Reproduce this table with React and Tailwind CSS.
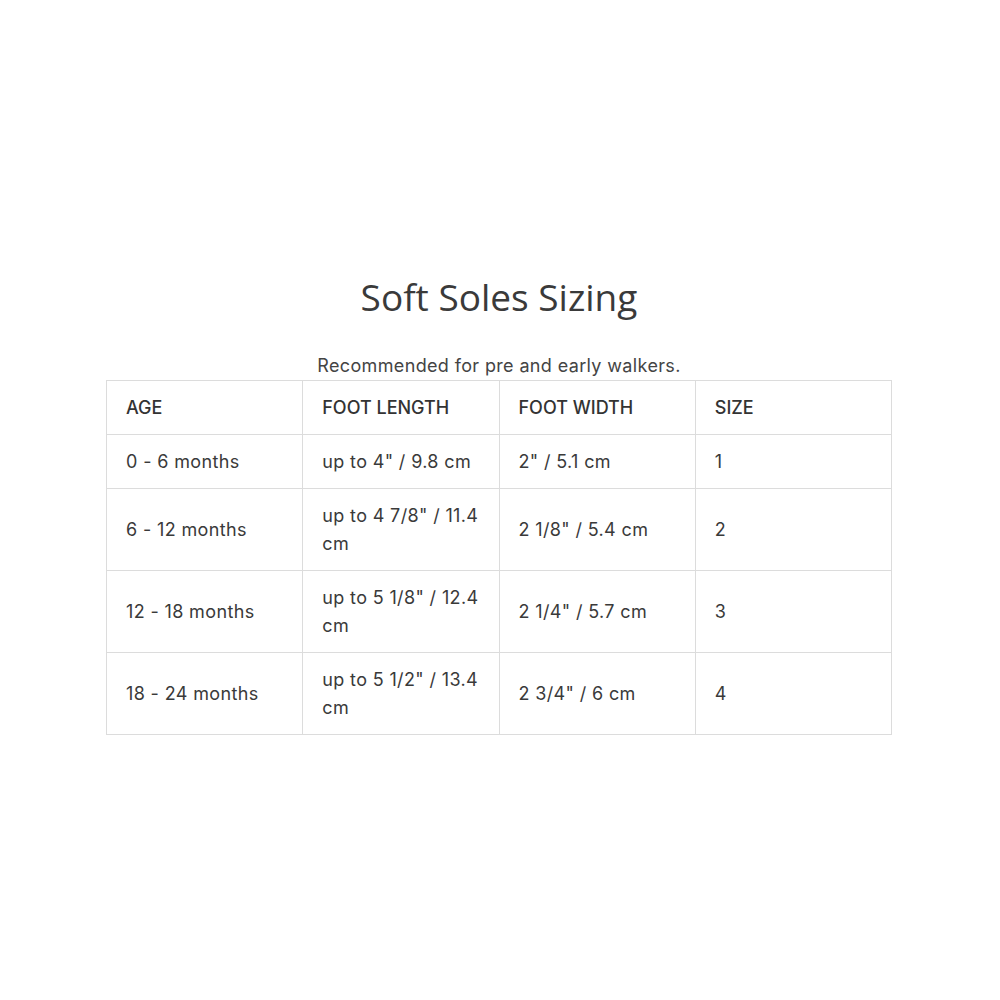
import React from "react";

const rows = [
  ["0 - 6 months", "up to 4\" / 9.8 cm", "2\" / 5.1 cm", "1"],
  ["6 - 12 months", "up to 4 7/8\" / 11.4 cm", "2 1/8\" / 5.4 cm", "2"],
  ["12 - 18 months", "up to 5 1/8\" / 12.4 cm", "2 1/4\" / 5.7 cm", "3"],
  ["18 - 24 months", "up to 5 1/2\" / 13.4 cm", "2 3/4\" / 6 cm", "4"],
];

export default function App() {
  return (
    <div className="min-h-screen bg-white pt-[274px] text-[#333]">
      <div className="ml-[106px] w-[786px]">
        <h1 className="text-center font-['Open_Sans',sans-serif] text-[37px] leading-[46px] text-[#3a3a3a]">
          Soft Soles Sizing
        </h1>
        <p className="mt-[33px] mb-[1px] text-center font-['Inter',sans-serif] text-[18px] leading-[26px] tracking-[0.02em] text-[#444]">
          Recommended for pre and early walkers.
        </p>
        <table className="w-full table-fixed border-collapse font-['Inter',sans-serif] text-[18px] leading-[28px] tracking-[0.02em]">
          <thead>
            <tr>
              {["AGE", "FOOT LENGTH", "FOOT WIDTH", "SIZE"].map((h) => (
                <th
                  key={h}
                  className="border border-[#dcdcdc] px-[19px] py-[12.5px] text-left font-medium tracking-normal text-[#333]"
                >
                  {h}
                </th>
              ))}
            </tr>
          </thead>
          <tbody>
            {rows.map((r) => (
              <tr key={r[0]}>
                {r.map((c, i) => (
                  <td
                    key={i}
                    className="border border-[#dcdcdc] px-[19px] py-[12.5px] text-[#3a3a3a]"
                  >
                    {c}
                  </td>
                ))}
              </tr>
            ))}
          </tbody>
        </table>
      </div>
    </div>
  );
}
